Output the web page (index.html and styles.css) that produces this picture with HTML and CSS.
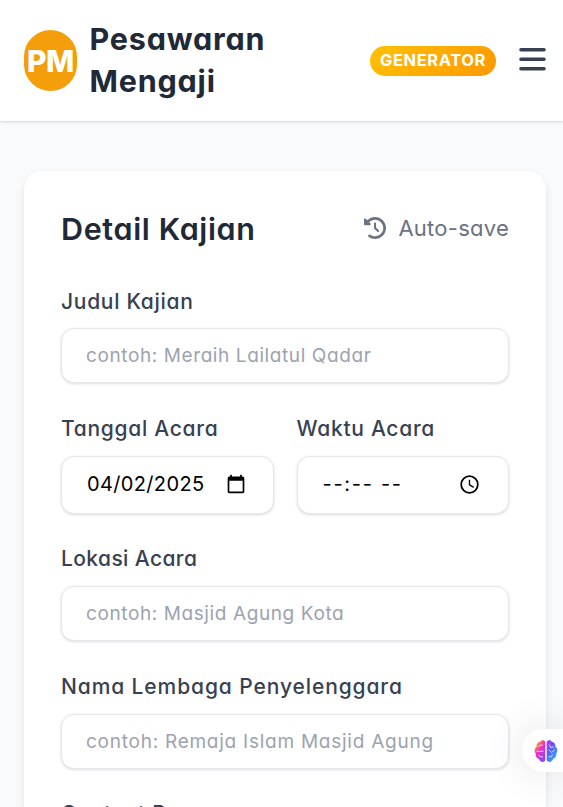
FILE: index.html
```html
<!DOCTYPE html>
<html lang="id">
<head>
<meta charset="utf-8">
<meta name="viewport" content="width=device-width, initial-scale=1">
<title>Pesawaran Mengaji</title>
<link rel="stylesheet" href="styles.css">
</head>
<body>
<header class="topbar">
  <div class="logo"><span>PM</span></div>
  <div class="brand"><span>Pesawaran</span><br><span>Mengaji</span></div>
  <div class="badge"><span>GENERATOR</span></div>
  <svg class="menu" viewBox="0 0 27 23" aria-label="Menu"><path d="M2 1.800H25M2 11.300H25M2 20.800H25" fill="none" stroke="#374151" stroke-width="3.600" stroke-linecap="round"/></svg>
</header>
<main class="card">
  <div class="card-head">
    <h1>Detail Kajian</h1>
    <div class="autosave">
      <svg viewBox="0 0 512 512" aria-hidden="true"><path fill="currentColor" d="M75 75L41 41C25.900 25.900 0 36.600 0 57.900V168c0 13.300 10.700 24 24 24H134.100c21.400 0 32.100-25.900 17-41l-30.800-30.800C155 85.500 203 64 256 64c106 0 192 86 192 192s-86 192-192 192c-40.800 0-78.600-12.700-109.700-34.400c-14.500-10.100-34.400-6.600-44.600 7.900s-6.600 34.400 7.900 44.600C151.200 495 201.700 512 256 512c141.400 0 256-114.600 256-256S397.400 0 256 0C185.300 0 121.300 28.700 75 75zm181 53c-13.300 0-24 10.700-24 24V256c0 6.400 2.500 12.500 7 17l72 72c9.400 9.400 24.600 9.400 33.900 0s9.400-24.600 0-33.900l-65-65V152c0-13.300-10.700-24-24-24z"/></svg>
      <span>Auto-save</span>
    </div>
  </div>
  <div class="field">
    <div class="label"><span>Judul Kajian</span></div>
    <div class="input hint"><span>contoh: Meraih Lailatul Qadar</span></div>
  </div>
  <div class="row">
    <div class="field">
      <div class="label"><span>Tanggal Acara</span></div>
      <div class="input picker"><span class="date">04/02/2025</span>
        <svg class="cal" viewBox="0 0 24 24" aria-hidden="true"><path d="M20 3h-1V1h-2v2H7V1H5v2H4c-1.100 0-2 .9-2 2v16c0 1.100.9 2 2 2h16c1.100 0 2-.9 2-2V5c0-1.100-.9-2-2-2zm0 18H4V8h16v13z"/></svg>
      </div>
    </div>
    <div class="field">
      <div class="label"><span>Waktu Acara</span></div>
      <div class="input picker"><span class="time">--:-- --</span>
        <svg class="clock" viewBox="0 0 18 18" aria-hidden="true"><circle cx="9" cy="9" r="7.900" fill="none" stroke="#000" stroke-width="1.700"/><path d="M9 4.500V9.300L13 11.700" fill="none" stroke="#000" stroke-width="1.300"/></svg>
      </div>
    </div>
  </div>
  <div class="field">
    <div class="label place"><span>Lokasi Acara</span></div>
    <div class="input hint"><span>contoh: Masjid Agung Kota</span></div>
  </div>
  <div class="field">
    <div class="label host"><span>Nama Lembaga Penyelenggara</span></div>
    <div class="input hint host-hint"><span>contoh: Remaja Islam Masjid Agung</span></div>
  </div>
  <div class="field last">
    <div class="label"><span>Contact Person</span></div>
  </div>
</main>
<div class="assistant">
  <svg viewBox="0 0 24 24" aria-hidden="true">
    <defs>
      <linearGradient id="warm" x1="0" y1="0" x2=".7" y2="1"><stop offset="0" stop-color="#ffa51c"/><stop offset=".25" stop-color="#ff8a35"/><stop offset=".5" stop-color="#f02fc4"/><stop offset="1" stop-color="#8b45f5"/></linearGradient>
      <linearGradient id="cool" x1="0" y1="0" x2=".6" y2="1"><stop offset="0" stop-color="#c32be8"/><stop offset=".5" stop-color="#5862f5"/><stop offset="1" stop-color="#2babff"/></linearGradient>
    </defs>
    <path fill="url(#warm)" d="M11.300 3C10.500.6 7 .6 6 3 3.500 3 2 5.500 2.800 7.600.3 9 0 13 1.800 14.600 1.200 17.500 3 19.500 4.800 19.800 5.500 23.500 10.500 24 11.300 21Z"/>
    <path fill="url(#cool)" d="M12.700 3C13.500.6 17 .6 18 3c2.500 0 4 2.500 3.200 4.600C23.700 9 24 13 22.200 14.600c.6 2.900-1.200 4.900-3 5.200-.7 3.700-5.700 4.200-6.500 1.200Z"/>
    <path fill="none" stroke="#fff" stroke-width=".9" stroke-opacity=".85" stroke-linecap="round" d="M4.500 7.500Q6 5.500 8.500 6M3 12.300H9M5 16.500Q6 18.500 8.500 18M15.500 6L16.500 8.500 19.500 8M15 11L17.500 13.500 20.500 11M15 18Q18 18.500 18.500 16"/>
  </svg>
</div>
</body>
</html>
```
FILE: styles.css
```css
* { box-sizing: border-box; }
body {
  margin: 0;
  height: 807px;
  overflow: hidden;
  background: #f9fafb;
  color: #1f2937;
  font-family: Inter, "Open Sans", sans-serif;
  font-feature-settings: "cv11";
}
span { white-space: nowrap; }
.topbar {
  display: flex;
  align-items: center;
  height: 121px;
  padding: 0 17px 0 24px;
  background: #fff;
  box-shadow: 0 1px 3px rgba(0, 0, 0, .16);
}
.logo {
  display: flex;
  align-items: center;
  justify-content: center;
  width: 53px;
  height: 61px;
  border-radius: 27px;
  background: #f59e0b;
  color: #fff;
  font-size: 30px;
  font-weight: 800;
  letter-spacing: -.5px;
}
.brand {
  margin: -1px 0 0 12.5px;
  font-size: 30.5px;
  font-weight: 700;
  line-height: 42px;
  letter-spacing: .8px;
}
.badge {
  display: flex;
  align-items: center;
  justify-content: center;
  width: 126px;
  height: 30px;
  margin: 0 0 0 auto;
  padding-bottom: 1px;
  border-radius: 15px;
  background: linear-gradient(135deg, #ffc107, #ff9800);
  color: #fff;
  font-size: 16.5px;
  font-weight: 700;
  letter-spacing: .6px;
}
.menu { width: 27px; height: 23px; margin: -3px 0 0 23px; }
.card {
  margin: 50px 17px 0 24px;
  height: 636px;
  padding: 36px 37px 0;
  border-radius: 19px 19px 0 0;
  background: #fff;
  box-shadow: 0 4px 8px rgba(0, 0, 0, .09);
}
.card-head {
  display: flex;
  align-items: center;
  justify-content: space-between;
  height: 42px;
  margin-bottom: 37.5px;
}
h1 { margin: 0; font-size: 30.5px; font-weight: 600; letter-spacing: .65px; white-space: nowrap; }
.autosave { display: flex; align-items: center; gap: 12px; color: #6b7280; font-size: 22px; letter-spacing: .25px; }
.autosave svg { width: 22px; height: 22px; }
.field { margin-bottom: 31px; }
.row { display: grid; grid-template-columns: 1fr 1fr; column-gap: 23px; }
.label {
  height: 28px;
  margin-bottom: 13.25px;
  color: #374151;
  font-size: 21px;
  font-weight: 500;
  line-height: 30px;
  letter-spacing: .72px;
}
.place { letter-spacing: .4px; line-height: 28px; }
.host { letter-spacing: .9px; }
.input {
  display: flex;
  align-items: center;
  height: 55.5px;
  padding: 0 25px;
  border: 1px solid #e5e7eb;
  border-radius: 13px;
  background: #fff;
  box-shadow: 0 1px 3px rgba(0, 0, 0, .14);
  font-size: 19px;
  letter-spacing: .6px;
}
.hint { padding-left: 24px; color: #9ca3af; }
.host-hint { letter-spacing: .75px; }
.picker { justify-content: space-between; height: 58px; padding-bottom: 1px; color: #000; font-size: 20px; letter-spacing: .35px; }
.time { letter-spacing: 1.7px; }
.cal { width: 20px; height: 20px; margin-right: 2px; }
.clock { width: 19px; height: 19px; margin-right: 4px; }
.last { height: 8px; margin: 0; }
.last .label { line-height: 27.5px; }
.assistant {
  position: fixed;
  right: 0;
  top: 729px;
  display: flex;
  align-items: center;
  width: 41px;
  height: 43px;
  padding-left: 12px;
  border-radius: 22px 0 0 22px;
  background: #fff;
  box-shadow: 0 0 40px rgba(0, 0, 0, .12);
}
.assistant svg { width: 24px; height: 24px; flex: none; }
```
